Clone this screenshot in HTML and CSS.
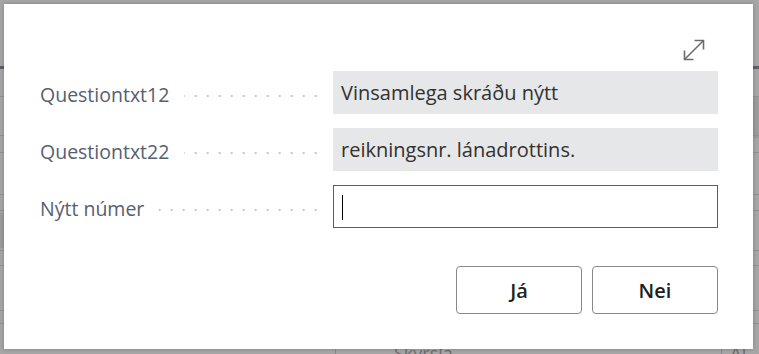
FILE: index.html
```html
<!DOCTYPE html>
<html lang="is">
<head>
    <meta charset="UTF-8" />
    <title>Nýtt númer</title>
    <link rel="stylesheet" href="styles.css">
</head>
<body>
    <!-- Síðan fyrir aftan gluggann (dempuð) -->
    <div class="page">
        <div class="line dark" style="top: 66px"></div>
        <div class="line" style="top: 96px"></div>
        <div class="band right" style="top: 97px; height: 41px"></div>
        <div class="line" style="top: 135px"></div>
        <div class="line" style="top: 152px"></div>
        <div class="line" style="top: 194px"></div>
        <div class="line" style="top: 210px"></div>
        <div class="band left" style="top: 213px; height: 35px"></div>
        <div class="line" style="top: 250px"></div>
        <div class="line" style="top: 265px"></div>
        <div class="line" style="top: 310px"></div>
        <div class="line" style="top: 323px"></div>
        <div class="footer-row">
            <span class="cell wide"></span>
            <span class="cell mid">Skýrsla</span>
            <span class="cell">AL</span>
        </div>
    </div>

    <!-- Gluggi -->
    <div class="dialog">
        <div class="dialog-head">
            <button class="icon-btn" title="Stækka">
                <svg width="24" height="24" viewBox="0 0 24 24" fill="none" stroke="#6b6b6b" stroke-width="1.6">
                    <path d="M2.5 21.5 L21.5 2.5" />
                    <path d="M12.5 2.5 H21.5 V11.5" />
                    <path d="M2.5 12.5 V21.5 H11.5" />
                </svg>
            </button>
        </div>

        <div class="form">
            <div class="row">
                <label class="caption"><span>Questiontxt12</span><i class="leader"></i></label>
                <div class="field readonly">Vinsamlega skráðu nýtt</div>
            </div>
            <div class="row">
                <label class="caption"><span>Questiontxt22</span><i class="leader"></i></label>
                <div class="field readonly">reikningsnr. lánadrottins.</div>
            </div>
            <div class="row">
                <label class="caption" for="newno"><span>Nýtt númer</span><i class="leader"></i></label>
                <div class="field editable" id="newno"><span class="caret"></span></div>
            </div>
        </div>

        <div class="actions">
            <button class="btn">Já</button>
            <button class="btn">Nei</button>
        </div>
    </div>
</body>
</html>
```

FILE: styles.css
```css
/* Almennt */
body {
    margin: 0;
    padding: 0;
    width: 759px;
    height: 354px;
    overflow: hidden;
    background-color: #a6a6a6;
    font-family: "Open Sans", "Noto Sans", Arial, sans-serif;
}

/* Bakgrunnur */
.page {
    position: relative;
    width: 759px;
    height: 354px;
}

.line {
    position: absolute;
    left: 0;
    right: 0;
    height: 1px;
    background-color: #939393;
}

.line.dark {
    height: 3px;
    background-color: #5c6168;
}

.band {
    position: absolute;
    background-color: #9c9c9c;
}

.band.left {
    left: 0;
    width: 8px;
}

.band.right {
    right: 0;
    width: 10px;
}

.footer-row {
    position: absolute;
    left: 0;
    right: 0;
    top: 341px;
    height: 20px;
    display: flex;
    color: #6e6e6e;
    font-size: 18px;
}

.footer-row .cell {
    padding-left: 8px;
    border-left: 1px solid #8a8a8a;
}

.footer-row .wide {
    width: 327px;
    border-left: none;
}

.footer-row .mid {
    width: 386px;
    padding-left: 58px;
    box-sizing: border-box;
}

/* Gluggi */
.dialog {
    position: absolute;
    left: 4px;
    top: 4px;
    width: 749px;
    height: 345px;
    box-sizing: border-box;
    padding: 0 35px 0 36px;
    background-color: #fff;
    box-shadow: 0 0 4px rgba(0,0,0,0.25);
}

.dialog-head {
    height: 67px;
    display: flex;
    justify-content: flex-end;
    align-items: flex-start;
}

.icon-btn {
    margin: 34px 12px 0 0;
    padding: 0;
    width: 24px;
    height: 24px;
    border: none;
    background: none;
    cursor: pointer;
}

.form {
    display: flex;
    flex-direction: column;
    gap: 14px;
}

.row {
    display: grid;
    grid-template-columns: 277px 1fr;
    gap: 16px;
    height: 43px;
    align-items: center;
}

.caption {
    display: flex;
    align-items: center;
    gap: 15px;
    font-size: 19.5px;
    color: #56606e;
    padding-top: 4px;
}

.leader {
    flex: 1;
    height: 4px;
    margin-top: 2px;
    background-image: radial-gradient(circle, #c6c6ca 1.1px, transparent 1.4px);
    background-size: 12px 4px;
    background-position: right -5px center;
    background-repeat: repeat-x;
}

.field {
    height: 43px;
    box-sizing: border-box;
    display: flex;
    align-items: center;
    padding: 0 8px;
    font-size: 20px;
    color: #323130;
}

.field.readonly {
    background-color: #e6e7e9;
}

.field.editable {
    border: 1px solid #00858a;
}

.caret {
    display: block;
    width: 1px;
    height: 25px;
    margin-top: 1px;
    background-color: #000;
}

/* Hnappar */
.actions {
    display: flex;
    justify-content: flex-end;
    gap: 10px;
    margin-top: 38px;
}

.btn {
    width: 126px;
    height: 48px;
    background-color: #fff;
    border: 1px solid #8a8886;
    border-radius: 4px;
    font-family: "Open Sans", "Noto Sans", Arial, sans-serif;
    font-size: 20px;
    font-weight: 600;
    color: #201f1e;
    cursor: pointer;
}
```
